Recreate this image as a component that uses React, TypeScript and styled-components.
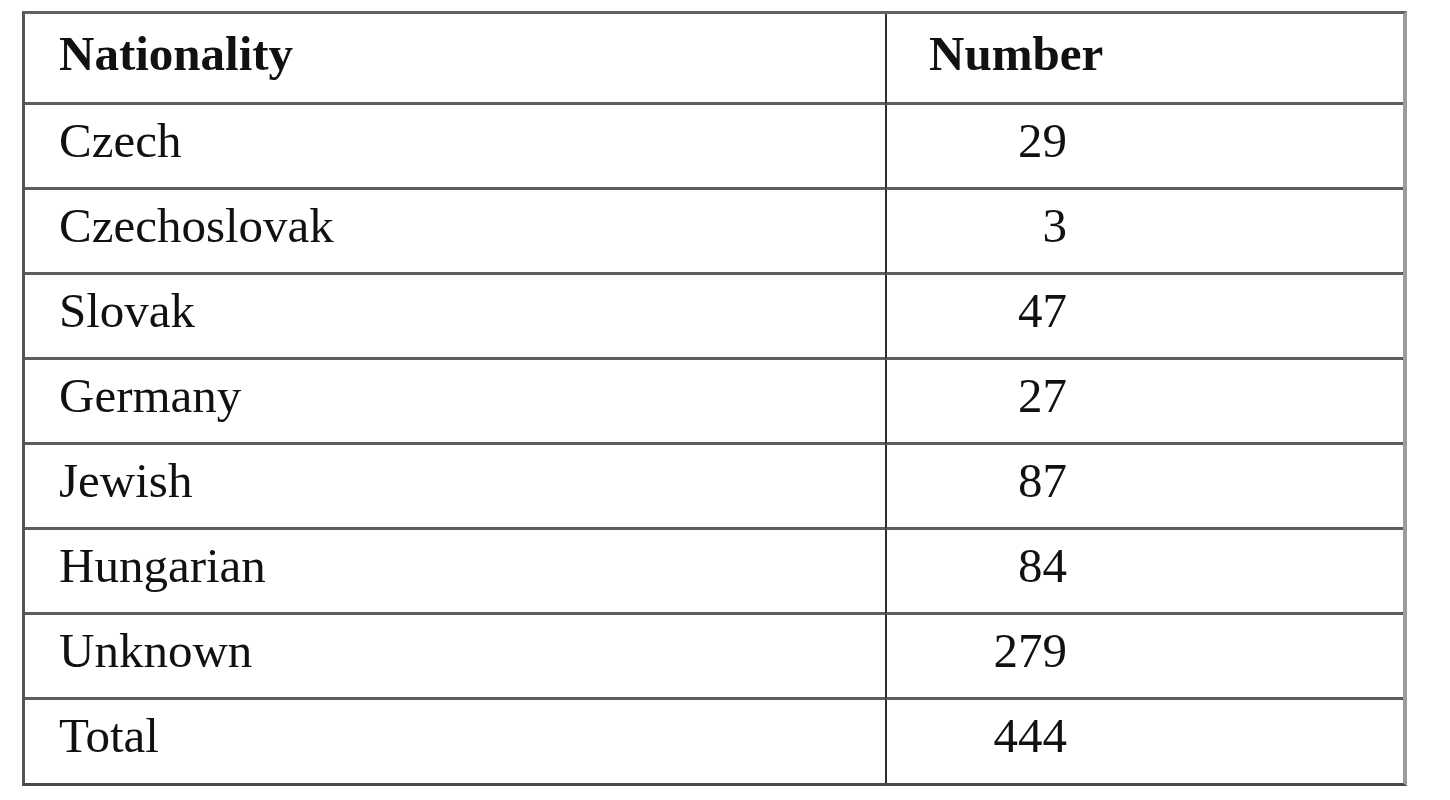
import styled, { createGlobalStyle } from "styled-components";

const GlobalStyle = createGlobalStyle`
  html, body {
    margin: 0;
    padding: 0;
    background: #ffffff;
  }
`;

const Page = styled.div`
  padding: 11px 0 0 22px;
`;

const Table = styled.table`
  border-collapse: separate;
  border-spacing: 0;
  width: 1385px;
  table-layout: fixed;
  border-top: 3px solid #626262;
  border-left: 3px solid #555555;
  border-right: 4px solid #9c9c9c;
  border-bottom: 3px solid #484848;
  font-family: "Liberation Serif", "Times New Roman", serif;
  font-size: 49px;
  line-height: 55px;
  color: #111111;
`;

const Cell = styled.td<{ $number?: boolean; $last?: boolean }>`
  box-sizing: border-box;
  vertical-align: top;
  height: ${({ $last }) => ($last ? "83px" : "85px")};
  padding: 8px 0 0 ${({ $number }) => ($number ? "42px" : "34px")};
  border-left: ${({ $number }) => ($number ? "2px solid #2e2e2e" : "none")};
  border-bottom: ${({ $last }) => ($last ? "none" : "3px solid #5e5e5e")};
  width: ${({ $number }) => ($number ? "auto" : "860px")};
  white-space: nowrap;
`;

const HeadCell = styled(Cell).attrs({ as: "th" })`
  height: 91px;
  padding-top: 12px;
  font-weight: bold;
  text-align: left;
`;

const Value = styled.span`
  display: inline-block;
  width: 138px;
  text-align: right;
`;

const rows: [string, number][] = [
  ["Czech", 29],
  ["Czechoslovak", 3],
  ["Slovak", 47],
  ["Germany", 27],
  ["Jewish", 87],
  ["Hungarian", 84],
  ["Unknown", 279],
  ["Total", 444],
];

export default function App() {
  return (
    <>
      <GlobalStyle />
      <Page>
        <Table>
          <thead>
            <tr>
              <HeadCell>Nationality</HeadCell>
              <HeadCell $number>Number</HeadCell>
            </tr>
          </thead>
          <tbody>
            {rows.map(([name, count], i) => {
              const last = i === rows.length - 1;
              return (
                <tr key={name}>
                  <Cell $last={last}>{name}</Cell>
                  <Cell $number $last={last}>
                    <Value>{count}</Value>
                  </Cell>
                </tr>
              );
            })}
          </tbody>
        </Table>
      </Page>
    </>
  );
}
